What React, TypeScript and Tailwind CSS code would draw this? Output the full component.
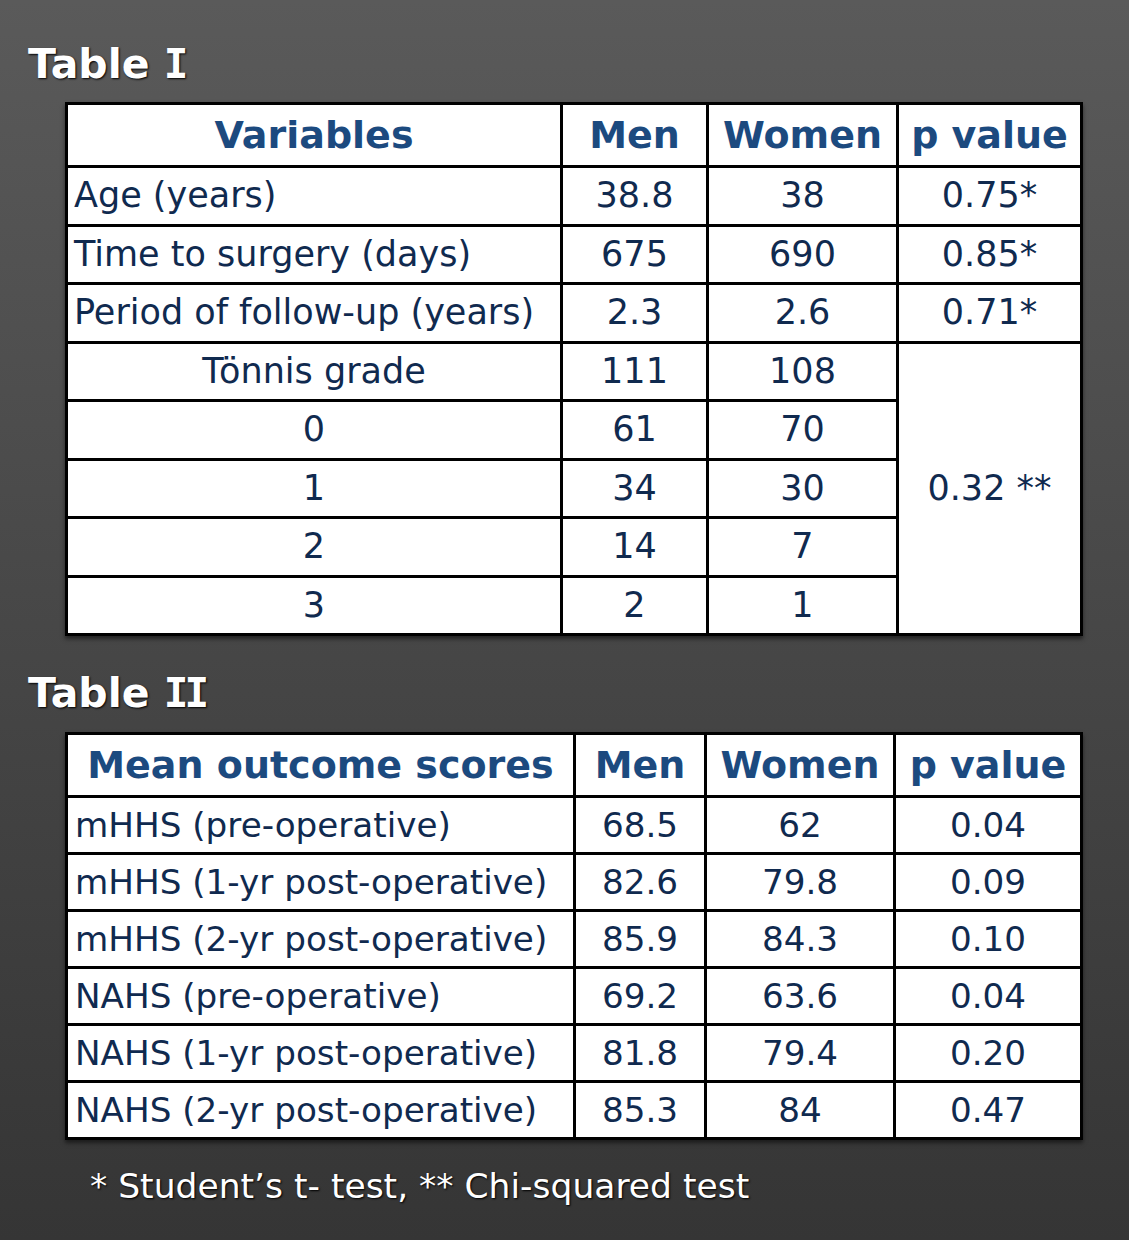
import React from 'react';

const font = { fontFamily: '"DejaVu Sans", Verdana, sans-serif' };

const TABLE1 = [
  ['Age (years)', '38.8', '38', '0.75*'],
  ['Time to surgery (days)', '675', '690', '0.85*'],
  ['Period of follow-up (years)', '2.3', '2.6', '0.71*'],
];

const TONNIS = [
  ['0', '61', '70'],
  ['1', '34', '30'],
  ['2', '14', '7'],
  ['3', '2', '1'],
];

const TABLE2 = [
  ['mHHS (pre-operative)', '68.5', '62', '0.04'],
  ['mHHS (1-yr post-operative)', '82.6', '79.8', '0.09'],
  ['mHHS (2-yr post-operative)', '85.9', '84.3', '0.10'],
  ['NAHS (pre-operative)', '69.2', '63.6', '0.04'],
  ['NAHS (1-yr post-operative)', '81.8', '79.4', '0.20'],
  ['NAHS (2-yr post-operative)', '85.3', '84', '0.47'],
];

const th = 'border-[3px] border-black text-[#1c4a7f] font-bold text-[38px] text-center align-middle leading-none p-0';
const td = 'border-[3px] border-black text-[#102a4f] text-[35px] align-middle leading-none p-0';
const td2 = 'border-[3px] border-black text-[#102a4f] text-[34.2px] align-middle leading-none p-0';

// Verdana's bold capital I has slab serifs; the mono face is the closest match
function Title({ word, numeral }: { word: string; numeral: string }) {
  return (
    <h2 className="text-white font-bold text-[41px] leading-none pl-[28px]" style={{ textShadow: '1px 1px 2px #000' }}>
      {word}{' '}
      <span style={{ fontFamily: '"DejaVu Sans Mono", monospace' }} className="tracking-[-4px]">{numeral}</span>
    </h2>
  );
}

export default function App() {
  return (
    <div className="w-[1129px] h-[1240px] bg-gradient-to-b from-[#5a5a5a] to-[#353535] pt-[44px]" style={font}>
      <Title word="Table" numeral="I" />

      {/* Table I */}
      <table className="ml-[65px] mt-[17px] w-[1015px] table-fixed border-collapse bg-white shadow-[0_3px_4px_rgba(0,0,0,0.5)]">
        <colgroup>
          <col className="w-[495px]" />
          <col className="w-[146px]" />
          <col className="w-[190px]" />
          <col className="w-[184px]" />
        </colgroup>
        <thead>
          <tr className="h-[63px]">
            <th className={th}>Variables</th>
            <th className={th}>Men</th>
            <th className={th}>Women</th>
            <th className={th}>p value</th>
          </tr>
        </thead>
        <tbody>
          {TABLE1.map(r => (
            <tr key={r[0]} className="h-[58.5px]">
              <td className={`${td} pl-[6px]`}>{r[0]}</td>
              <td className={`${td} text-center`}>{r[1]}</td>
              <td className={`${td} text-center`}>{r[2]}</td>
              <td className={`${td} text-center`}>{r[3]}</td>
            </tr>
          ))}
          <tr className="h-[58.5px]">
            <td className={`${td} text-center`}>Tönnis grade</td>
            <td className={`${td} text-center`}>111</td>
            <td className={`${td} text-center`}>108</td>
            <td className={`${td} text-center`} rowSpan={5}>0.32 **</td>
          </tr>
          {TONNIS.map(r => (
            <tr key={r[0]} className="h-[58.5px]">
              <td className={`${td} text-center`}>{r[0]}</td>
              <td className={`${td} text-center`}>{r[1]}</td>
              <td className={`${td} text-center`}>{r[2]}</td>
            </tr>
          ))}
        </tbody>
      </table>

      <div className="mt-[37px]">
        <Title word="Table" numeral="II" />
      </div>

      {/* Table II */}
      <table className="ml-[65px] mt-[18px] w-[1015px] table-fixed border-collapse bg-white shadow-[0_3px_4px_rgba(0,0,0,0.5)]">
        <colgroup>
          <col className="w-[508px]" />
          <col className="w-[131px]" />
          <col className="w-[189px]" />
          <col className="w-[187px]" />
        </colgroup>
        <thead>
          <tr className="h-[63px]">
            <th className={th}>Mean outcome scores</th>
            <th className={th}>Men</th>
            <th className={th}>Women</th>
            <th className={th}>p value</th>
          </tr>
        </thead>
        <tbody>
          {TABLE2.map(r => (
            <tr key={r[0]} className="h-[57px]">
              <td className={`${td2} pl-[7px]`}>{r[0]}</td>
              <td className={`${td2} text-center`}>{r[1]}</td>
              <td className={`${td2} text-center`}>{r[2]}</td>
              <td className={`${td2} text-center`}>{r[3]}</td>
            </tr>
          ))}
        </tbody>
      </table>

      <p className="mt-[29px] pl-[90px] text-white text-[34.5px] leading-none" style={{ textShadow: '1px 1px 2px #000' }}>
        * Student’s t- test, ** Chi-squared test
      </p>
    </div>
  );
}
